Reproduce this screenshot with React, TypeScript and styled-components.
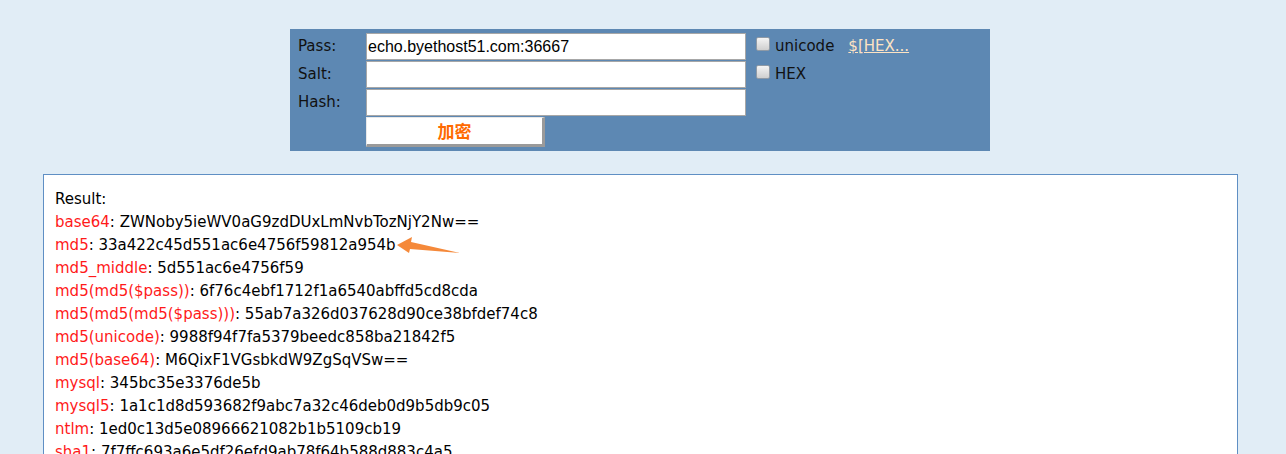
import React from "react";
import styled, { createGlobalStyle } from "styled-components";

const GlobalStyle = createGlobalStyle`
  html, body {
    margin: 0;
    padding: 0;
    background: #e1edf6;
    font-family: "DejaVu Sans", Verdana, sans-serif;
    font-size: 15px;
    color: #000;
  }
`;

const Page = styled.div`
  width: 1286px;
  height: 454px;
  overflow: hidden;
  padding-top: 29px;
  box-sizing: border-box;
  position: relative;
`;

const Panel = styled.form`
  margin-left: 290px;
  width: 700px;
  height: 122px;
  box-sizing: border-box;
  padding: 4px 0 0 8px;
  background: #5d88b3;
  display: grid;
  grid-template-columns: 68px 380px auto;
  grid-template-rows: 28px 28px 28px 30px;
`;

const Label = styled.label`
  font-size: 15px;
  line-height: 26px;
  color: #111;
`;

const TextInput = styled.input`
  width: 380px;
  height: 27px;
  box-sizing: border-box;
  margin: 0;
  padding: 0 1px;
  border: 1px solid #a7a7a7;
  background: #fff;
  font-family: "Liberation Sans", Arial, sans-serif;
  font-size: 16px;
  color: #000;
  outline: none;
`;

const Options = styled.div`
  display: flex;
  align-items: center;
  padding-left: 10px;
  height: 26px;
`;

const Box = styled.span`
  display: inline-block;
  width: 12px;
  height: 12px;
  border: 1px solid #8f9aa6;
  border-radius: 2px;
  background: linear-gradient(#f4f4f4, #cfcfcf);
  margin-right: 5px;
  margin-top: -5px;
`;

const OptionText = styled.span`
  font-size: 15px;
  color: #111;
`;

const HexLink = styled.a`
  margin-left: 14px;
  color: #fde3c3;
  font-size: 15px;
  text-decoration: underline;
`;

const Submit = styled.button`
  grid-column: 2;
  width: 179px;
  height: 30px;
  margin: 0;
  padding: 0;
  background: #fff;
  border-style: solid;
  border-width: 1px 3px 3px 1px;
  border-color: #e8e8e8 #9a9a9a #9a9a9a #e8e8e8;
  color: #ff6a00;
  font-family: "Noto Sans CJK SC", sans-serif;
  font-weight: bold;
  font-size: 17px;
  line-height: 26px;
`;

const ResultBox = styled.div`
  margin: 23px 0 0 43px;
  width: 1195px;
  box-sizing: border-box;
  border: 1px solid #5f8fc4;
  background: #fff;
  padding: 13px 11px;
  line-height: 23px;
  font-size: 15px;
  height: 300px;
`;

const Line = styled.div`
  white-space: nowrap;
`;

const Key = styled.span`
  color: #ff1a1a;
`;

const Arrow = styled.svg`
  position: absolute;
  left: 0;
  top: 0;
  pointer-events: none;
`;

const results: [string, string][] = [
  ["base64", "ZWNoby5ieWV0aG9zdDUxLmNvbTozNjY2Nw=="],
  ["md5", "33a422c45d551ac6e4756f59812a954b"],
  ["md5_middle", "5d551ac6e4756f59"],
  ["md5(md5($pass))", "6f76c4ebf1712f1a6540abffd5cd8cda"],
  ["md5(md5(md5($pass)))", "55ab7a326d037628d90ce38bfdef74c8"],
  ["md5(unicode)", "9988f94f7fa5379beedc858ba21842f5"],
  ["md5(base64)", "M6QixF1VGsbkdW9ZgSqVSw=="],
  ["mysql", "345bc35e3376de5b"],
  ["mysql5", "1a1c1d8d593682f9abc7a32c46deb0d9b5db9c05"],
  ["ntlm", "1ed0c13d5e08966621082b1b5109cb19"],
  ["sha1", "7f7ffc693a6e5df26efd9ab78f64b588d883c4a5"]
];

export default function App() {
  return (
    <>
      <GlobalStyle />
      <Page>
        <Panel onSubmit={e => e.preventDefault()}>
          <Label>Pass:</Label>
          <TextInput defaultValue="echo.byethost51.com:36667" />
          <Options>
            <Box />
            <OptionText>unicode</OptionText>
            <HexLink href="#">$[HEX...</HexLink>
          </Options>
          <Label>Salt:</Label>
          <TextInput />
          <Options>
            <Box />
            <OptionText>HEX</OptionText>
          </Options>
          <Label>Hash:</Label>
          <TextInput />
          <span />
          <Submit type="submit">加密</Submit>
        </Panel>
        <ResultBox>
          <Line>Result:</Line>
          {results.map(([k, v]) => (
            <Line key={k}>
              <Key>{k}</Key>: {v}
            </Line>
          ))}
        </ResultBox>
        <Arrow width="1286" height="454">
          <polygon
            points="397,245 412,237 411,242 460,253 410,249 409,253"
            fill="#f5893a"
          />
        </Arrow>
      </Page>
    </>
  );
}
